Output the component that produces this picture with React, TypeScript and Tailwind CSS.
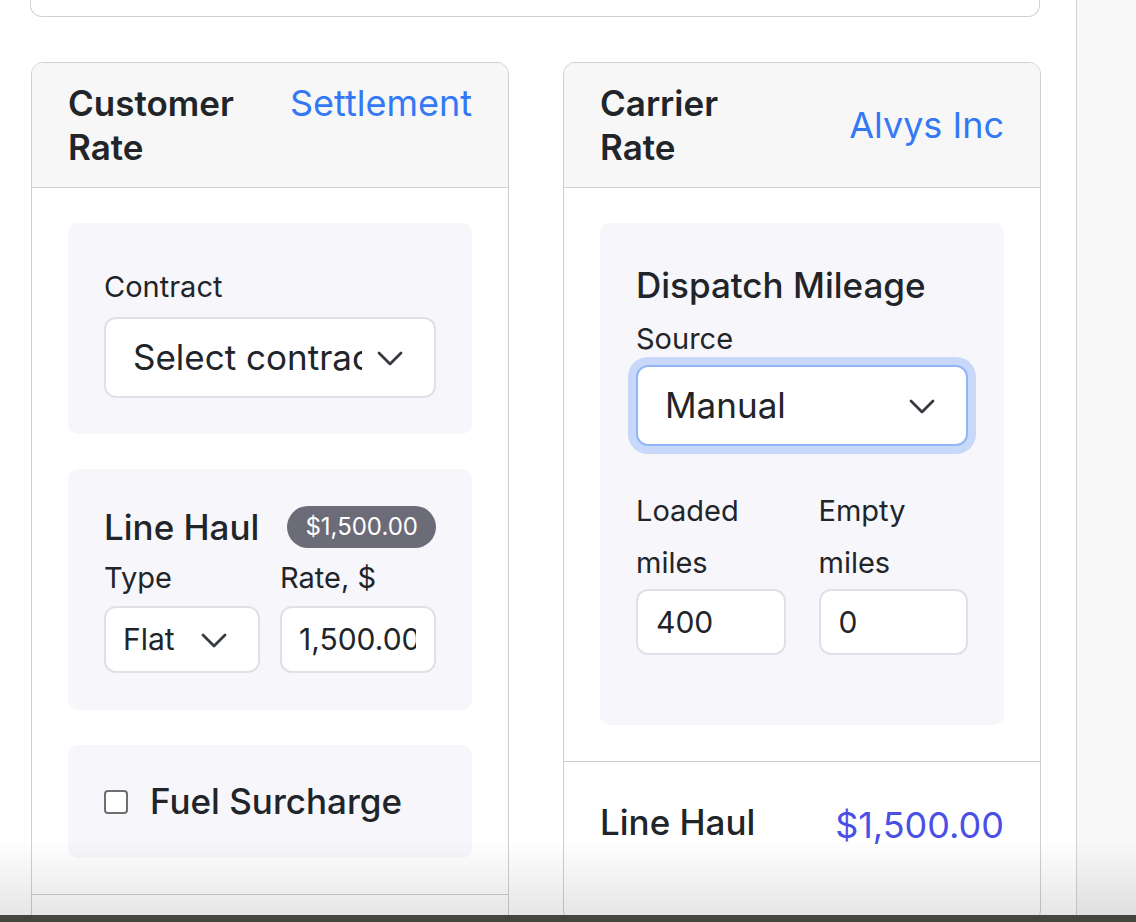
import React from 'react';

const Chevron: React.FC = () => (
  <svg width="32" height="32" viewBox="0 0 16 16" fill="none" stroke="#343a40" strokeWidth="1.4" strokeLinecap="round" strokeLinejoin="round">
    <path d="M2.5 5.5l5.5 5.5 5.5-5.5" />
  </svg>
);

interface SelectProps {
  value: string;
  height: string;
  textPad: string;
  focused?: boolean;
}

const FakeSelect: React.FC<SelectProps> = ({ value, height, textPad, focused }) => (
  <div
    className={`flex items-center bg-white rounded-[12px] border-2 ${height} ${
      focused ? 'border-[#93b6f7] ring-[8px] ring-[#c8d8fa]' : 'border-[#dee2e6]'
    }`}
  >
    <span className={`flex-1 min-w-0 overflow-hidden whitespace-nowrap ${textPad}`}>{value}</span>
    <span className="shrink-0 pr-[28px] flex items-center">
      <Chevron />
    </span>
  </div>
);

const Panel: React.FC<{ className?: string; children: React.ReactNode }> = ({ className = '', children }) => (
  <div className={`bg-[#f6f6fb] rounded-[10px] px-[36px] ${className}`}>{children}</div>
);

const CardHeader: React.FC<{ title: [string, string]; link: string; alignTop?: boolean }> = ({ title, link, alignTop }) => (
  <div
    className={`bg-[#f7f7f7] border-b border-[#cfcfcf] px-[36px] py-[18px] flex justify-between ${
      alignTop ? 'items-start' : 'items-center'
    }`}
  >
    <div className="text-[35px] leading-[44px] font-semibold">
      <div>{title[0]}</div>
      <div>{title[1]}</div>
    </div>
    <div className="text-[36px] leading-[44px] text-[#3478f6]">{link}</div>
  </div>
);

const CustomerRate: React.FC = () => (
  <div className="border border-[#cfcfcf] rounded-[12px] overflow-hidden bg-white">
    <CardHeader title={['Customer', 'Rate']} link="Settlement" alignTop />
    <div className="px-[36px] pt-[35px] pb-[36px] flex flex-col gap-[35px] border-b border-[#cfcfcf]">
      <Panel className="pt-[38px] pb-[36px]">
        <div className="text-[29px] leading-[52px] mb-[4px]">Contract</div>
        <FakeSelect value="Select contract" height="h-[81px]" textPad="ml-[27px] mr-[12px] text-[35px]" />
      </Panel>

      <Panel className="pt-[36px] pb-[37px]">
        <div className="h-[44px] flex items-center justify-between">
          <span className="text-[35px] font-medium">Line Haul</span>
          <span className="h-[42px] px-[18px] rounded-full bg-[#6c6b78] text-white text-[24px] flex items-center">
            $1,500.00
          </span>
        </div>
        <div className="grid grid-cols-2 gap-x-[20px] mt-[3px]">
          <div className="text-[29px] leading-[52px]">Type</div>
          <div className="text-[29px] leading-[52px]">Rate, $</div>
          <div className="mt-[2px]">
            <FakeSelect value="Flat" height="h-[67px]" textPad="ml-[17px] text-[30px]" />
          </div>
          <div className="mt-[2px] h-[67px] bg-white border-2 border-[#dee2e6] rounded-[12px] flex items-center pl-[17px] pr-[18px]">
            <span className="flex-1 min-w-0 overflow-hidden whitespace-nowrap text-[30px]">1,500.00</span>
          </div>
        </div>
      </Panel>

      <Panel className="py-[36px]">
        <label className="h-[41px] flex items-center gap-[22px]">
          <span className="w-[24px] h-[24px] rounded-[4px] border-2 border-[#6f6f6f] bg-white" />
          <span className="text-[35px] font-medium">Fuel Surcharge</span>
        </label>
      </Panel>
    </div>
    <div className="h-[120px]" />
  </div>
);

const CarrierRate: React.FC = () => (
  <div className="border border-[#cfcfcf] rounded-[12px] overflow-hidden bg-white">
    <CardHeader title={['Carrier', 'Rate']} link="Alvys Inc" />
    <div className="px-[36px] pt-[35px] pb-[36px] border-b border-[#cfcfcf]">
      <Panel className="pt-[36px] pb-[70px]">
        <div className="text-[35px] leading-[52px] font-medium">Dispatch Mileage</div>
        <div className="text-[29px] leading-[52px] mt-[2px]">Source</div>
        <FakeSelect value="Manual" height="h-[81px]" textPad="ml-[27px] text-[35px]" focused />
        <div className="grid grid-cols-2 gap-x-[33px] mt-[39px]">
          <div className="text-[29px] leading-[52px]">Loaded miles</div>
          <div className="text-[29px] leading-[52px]">Empty miles</div>
          <div className="h-[66px] bg-white border-2 border-[#dee2e6] rounded-[12px] flex items-center pl-[18px] text-[30px]">
            400
          </div>
          <div className="h-[66px] bg-white border-2 border-[#dee2e6] rounded-[12px] flex items-center pl-[18px] text-[30px]">
            0
          </div>
        </div>
      </Panel>
    </div>
    <div className="px-[36px] pt-[36px] h-[160px] flex items-start justify-between">
      <span className="text-[35px] leading-[48px] font-medium">Line Haul</span>
      <span className="text-[36px] leading-[54px] text-[#4a50e6]">$1,500.00</span>
    </div>
  </div>
);

export default function App() {
  return (
    <div className="relative h-[922px] overflow-hidden bg-white flex font-['Inter','Noto_Sans',sans-serif] text-[#212529]">
      <main className="w-[1077px] shrink-0 border-r border-[#d4d4d4] pl-[30px] pr-[36px]">
        <div className="h-[17px] border border-t-0 border-[#d0d0d0] rounded-b-[12px]" />
        <div className="mt-[45px] pl-[1px] grid grid-cols-[478px_478px] gap-x-[54px] items-start">
          <CustomerRate />
          <CarrierRate />
        </div>
      </main>
      <aside className="flex-1 bg-[#f8f8f8]" />

      {/* bottom shadow of the window edge */}
      <div className="pointer-events-none absolute left-0 right-0 bottom-[7px] h-[75px] bg-gradient-to-b from-transparent to-black/10" />
      <div className="absolute left-0 right-0 bottom-0 h-[7px] bg-[#45453f]" />
    </div>
  );
}
